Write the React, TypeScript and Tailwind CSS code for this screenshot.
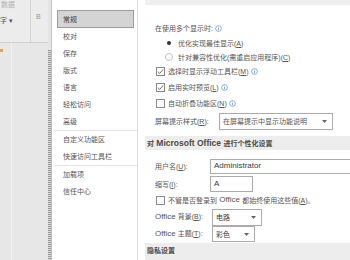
import React from "react";

const Info = () => (
  <svg width="7" height="7" viewBox="0 0 8 8" className="ml-[2px] inline-block shrink-0">
    <circle cx="4" cy="4" r="3.3" fill="none" stroke="#5b8fcc" strokeWidth="0.8" />
    <rect x="3.6" y="3.4" width="0.8" height="2.6" fill="#5b8fcc" />
    <rect x="3.6" y="2" width="0.8" height="0.8" fill="#5b8fcc" />
  </svg>
);

const Check = ({ checked }: { checked?: boolean }) => (
  <div className="w-[9px] h-[9px] border border-[#8a8a8a] bg-white shrink-0 flex items-center justify-center mr-[3px]">
    {checked && (
      <svg width="7" height="7" viewBox="0 0 8 8">
        <path d="M1 4.2 L3.1 6.2 L7 1.6" fill="none" stroke="#444" strokeWidth="0.9" />
      </svg>
    )}
  </div>
);

const Radio = ({ on }: { on?: boolean }) => (
  <div className={`w-[8px] h-[8px] rounded-full border ${on ? "border-white" : "border-[#c0c0c0]"} shrink-0 flex items-center justify-center mr-[5px]`}>
    {on && <div className="w-[4px] h-[4px] rounded-full bg-[#333]" />}
  </div>
);

const Arrow = () => (
  <svg width="5" height="3" viewBox="0 0 5 3" className="shrink-0">
    <path d="M0 0 L5 0 L2.5 3 Z" fill="#666" />
  </svg>
);

const L = ({ children, big }: { children: React.ReactNode; big?: boolean }) => (
  <span className={big ? "text-[8.5px]" : "text-[8px]"}>{children}</span>
);

const navTop = ["校对", "保存", "版式", "语言", "轻松访问", "高级"];

export default function App() {
  return (
    <div className="w-[350px] h-[260px] overflow-hidden flex bg-white text-[7px] leading-none text-[#555] font-['Liberation_Sans','Noto_Sans_CJK_SC',sans-serif]">
      {/* background window */}
      <div className="w-[48px] shrink-0 flex flex-col bg-[#e7e7e7]">
        <div className="h-[43px] shrink-0 bg-[#ececec] border-b border-[#cfcfcf] flex">
          <div className="w-[31px] border-r border-[#d4d4d4] flex flex-col pt-[1px]">
            <span className="text-[#b0b0b0] pl-[1px]">数据</span>
            <span className="mt-[9px] text-[#555] text-[7px]">字 ▾</span>
          </div>
          <div className="flex-1 pt-[13px] pl-[5px] text-[#999] text-[7px]">B</div>
        </div>
        <div className="flex-1 flex">
          <div className="w-[12px] border-r border-[#f2f2f2] pt-[6px]">
            <div className="w-[3px] h-[3px] bg-[#e8a060]" />
          </div>
          <div className="flex-1" />
        </div>
      </div>
      {/* ruler strip */}
      <div className="w-[4px] shrink-0 flex flex-col">
        <div className="h-[50px] bg-[#e4e4e4] border-r border-[#c4c4c4]" />
        <div className="flex-1 bg-[repeating-linear-gradient(to_bottom,#9a9a9a_0px,#9a9a9a_1px,#d8d8d8_1px,#d8d8d8_2px)] border-r border-[#bdbdbd]" />
      </div>
      {/* dialog nav */}
      <div className="w-[86px] shrink-0 bg-white border-r border-[#dcdcdc] pt-[10px] pl-[5px] pr-[3px] flex flex-col">
        <div className="h-[18px] bg-[#d4d4d4] border border-[#9c9c9c] flex items-center pl-[5px] text-[#3a3a3a]">常规</div>
        {navTop.map((t) => (
          <div key={t} className="h-[17px] flex items-center pl-[6px]">{t}</div>
        ))}
        <div className="h-px bg-[#e4e4e4] -ml-[3px] -mr-[3px]" />
        <div className="h-[17px] flex items-center pl-[6px]">自定义功能区</div>
        <div className="h-[17px] flex items-center pl-[6px]">快速访问工具栏</div>
        <div className="h-px bg-[#e4e4e4] -ml-[3px] -mr-[3px]" />
        <div className="h-[17px] flex items-center pl-[6px]">加载项</div>
        <div className="h-[17px] flex items-center pl-[6px]">信任中心</div>
      </div>
      {/* content */}
      <div className="flex-1 flex flex-col bg-white whitespace-nowrap">
        <div className="h-[5px] shrink-0 ml-[7px] bg-[#efefef]" />
        <div className="h-[15px] shrink-0" />
        <div className="h-[16px] shrink-0 flex items-center pl-[17px]">
          在使用多个显示时:<Info />
        </div>
        <div className="h-[14px] shrink-0 flex items-center pl-[27px]">
          <Radio on />优化实现最佳显示(<u>A</u>)
        </div>
        <div className="h-[14px] shrink-0 flex items-center pl-[27px]">
          <Radio />针对兼容性优化(需重启应用程序)(<u>C</u>)
        </div>
        <div className="h-[15px] shrink-0 flex items-center pl-[18px]">
          <Check checked />选择时显示浮动工具栏(<u>M</u>)<Info />
        </div>
        <div className="h-[16px] shrink-0 flex items-center pl-[18px]">
          <Check checked />启用实时预览(<u>L</u>)<Info />
        </div>
        <div className="h-[17px] shrink-0 flex items-center pl-[18px]">
          <Check />自动折叠功能区(<u>N</u>)<Info />
        </div>
        <div className="h-[19px] shrink-0 flex items-center pl-[17px]">
          <span className="w-[64px]">屏幕提示样式(<u>R</u>):</span>
          <div className="w-[114px] h-[17px] border border-[#ababab] bg-white flex items-center pl-[3px] pr-[5px] justify-between">
            <span>在屏幕提示中显示功能说明</span>
            <Arrow />
          </div>
        </div>
        <div className="h-[5px] shrink-0" />
        <div className="h-[14px] shrink-0 ml-[7px] bg-[#ededed] flex items-center pl-[2px] font-bold text-[#4a4a4a]">
          对 <L big>&nbsp;Microsoft Office&nbsp;</L> 进行个性化设置
        </div>
        <div className="h-[8px] shrink-0" />
        <div className="h-[16px] shrink-0 flex items-center pl-[17px]">
          <span className="w-[55px]">用户名(<u>U</u>):</span>
          <div className="w-[160px] h-[15px] border border-[#ababab] bg-white flex items-center pl-[3px] text-[#3a3a3a]">
            <L>Administrator</L>
          </div>
        </div>
        <div className="h-[2px] shrink-0" />
        <div className="h-[16px] shrink-0 flex items-center pl-[17px]">
          <span className="w-[55px]">缩写(<u>I</u>):</span>
          <div className="w-[43px] h-[16px] border border-[#ababab] bg-white flex items-center pl-[3px] text-[#3a3a3a]">
            <L>A</L>
          </div>
        </div>
        <div className="h-[16px] shrink-0 flex items-center pl-[18px]">
          <Check />不管是否登录到<L>&nbsp;Office&nbsp;</L>都始终使用这些值(<u>A</u>)。
        </div>
        <div className="h-[18px] shrink-0 flex items-center pl-[17px]">
          <span className="w-[57px]"><L>Office</L> 背景(<u>B</u>):</span>
          <div className="w-[50px] h-[17px] border border-[#ababab] bg-white flex items-center pl-[3px] pr-[5px] justify-between text-[#3a3a3a]">
            <span>电路</span>
            <Arrow />
          </div>
        </div>
        <div className="h-[16px] shrink-0 flex items-center pl-[17px]">
          <span className="w-[57px]"><L>Office</L> 主题(<u>T</u>):</span>
          <div className="w-[43px] h-[16px] border border-[#ababab] bg-white flex items-center pl-[3px] pr-[5px] justify-between text-[#3a3a3a]">
            <span>彩色</span>
            <Arrow />
          </div>
        </div>
        <div className="h-[1px] shrink-0" />
        <div className="h-[20px] shrink-0 ml-[7px] bg-[#ededed] flex items-start pt-[4px] pl-[2px] font-bold text-[#4a4a4a]">
          隐私设置
        </div>
      </div>
    </div>
  );
}
